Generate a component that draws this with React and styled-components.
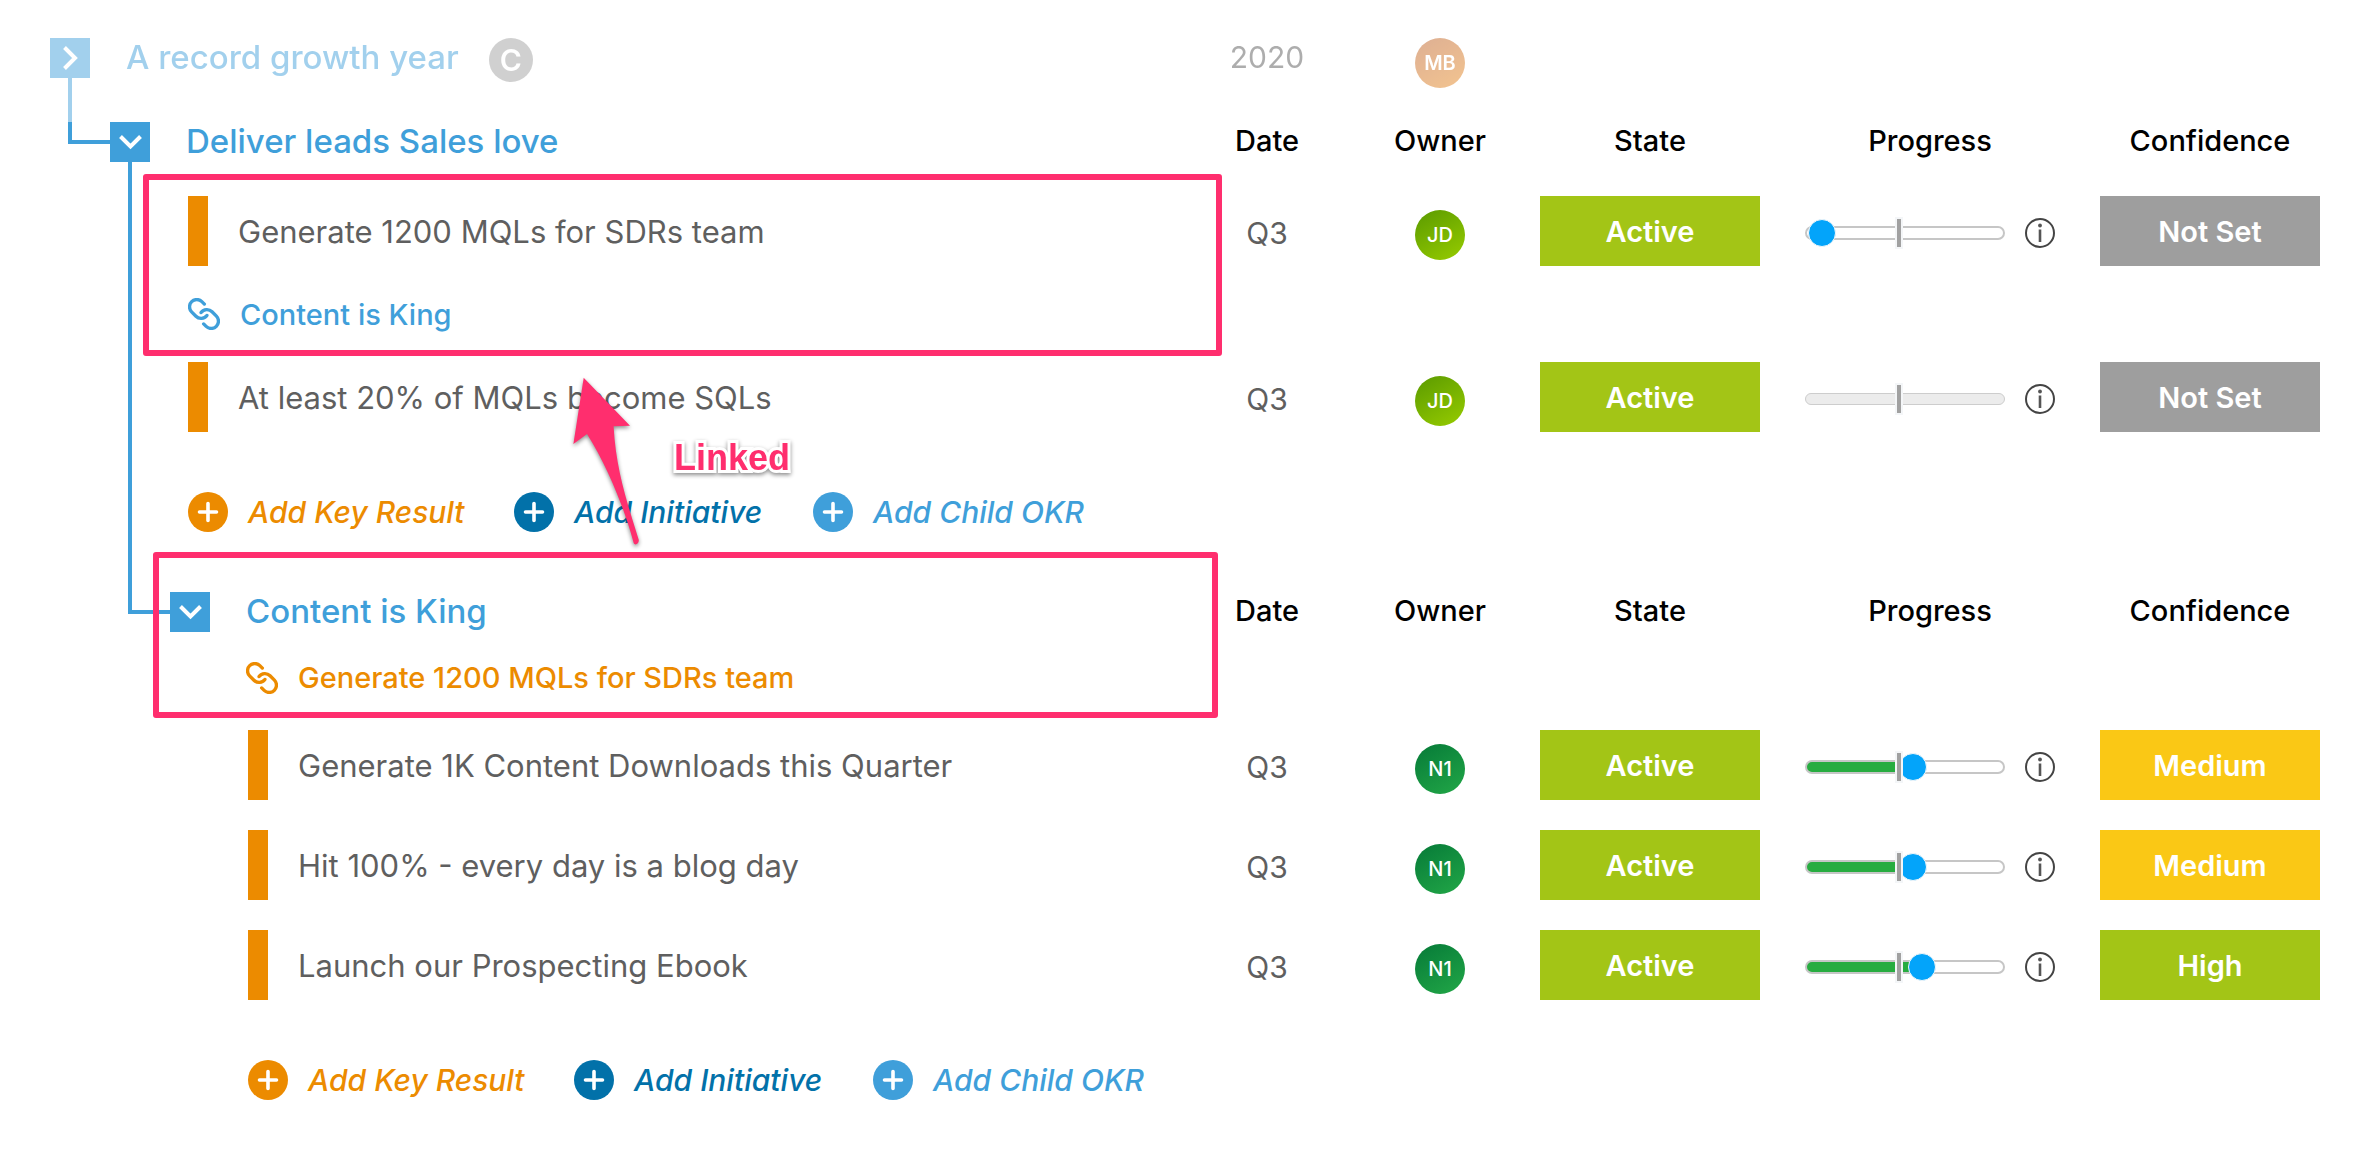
import React from 'react'
import styled, { createGlobalStyle } from 'styled-components'

const GlobalStyle = createGlobalStyle`
  * { box-sizing: border-box; }
  body {
    margin: 0;
    background: #fff;
    font-family: Inter, 'Open Sans', sans-serif;
  }
`

const blue = '#3f9fda'
const orange = '#ec8b00'
const darkBlue = '#0271a9'
const green = '#a3c516'
const pink = '#ff2e6e'
const grey = '#9e9e9e'
const yellow = '#fac815'

const avatarColors = {
  MB: ['#ba5a20', '#e68418'],
  JD: ['#5a9a00', '#97cc00'],
  N1: ['#067a38', '#22a747'],
}

const objectives = [
  {
    title: 'Deliver leads Sales love',
    keys: [
      { name: 'Generate 1200 MQLs for SDRs team', owner: 'JD', value: 0, confidence: 'Not Set', color: grey, link: 'Content is King' },
      { name: 'At least 20% of MQLs become SQLs', owner: 'JD', value: 0, locked: true, confidence: 'Not Set', color: grey },
    ],
  },
  {
    title: 'Content is King',
    link: 'Generate 1200 MQLs for SDRs team',
    keys: [
      { name: 'Generate 1K Content Downloads this Quarter', owner: 'N1', value: 55, confidence: 'Medium', color: yellow },
      { name: 'Hit 100% - every day is a blog day', owner: 'N1', value: 55, confidence: 'Medium', color: yellow },
      { name: 'Launch our Prospecting Ebook', owner: 'N1', value: 60, confidence: 'High', color: green },
    ],
  },
]

function LinkIcon() {
  return (
    <svg width="32" height="32" viewBox="1 1 22 22" fill="none" stroke="currentColor" strokeWidth="2.3" strokeLinecap="round" strokeLinejoin="round" aria-hidden="true">
      <g transform="matrix(-1 0 0 1 24 0)">
        <path d="M10 13a5 5 0 0 0 7.540.540l3-3a5 5 0 0 0-7.070-7.070l-1.720 1.710" />
        <path d="M14 11a5 5 0 0 0-7.540-.540l-3 3a5 5 0 0 0 7.070 7.070l1.710-1.710" />
      </g>
    </svg>
  )
}

function Chevron({ open }) {
  return (
    <svg width="40" height="40" viewBox="0 0 40 40" fill="none" stroke="#fff" strokeWidth="4" aria-hidden="true">
      <path d={open ? 'M10.500 14.500L20.500 24.500L30.500 14.500' : 'M14.500 9.500L25 20L14.500 30.500'} />
    </svg>
  )
}

function InfoIcon() {
  return (
    <svg width="30" height="30" viewBox="0 0 30 30" fill="none" aria-hidden="true">
      <circle cx="15" cy="15" r="14" stroke="#444" strokeWidth="2" />
      <circle cx="15" cy="7.500" r="1.900" fill="#555" />
      <path d="M15 11.500v12.500" stroke="#555" strokeWidth="2.600" />
    </svg>
  )
}

function PlusIcon({ color }) {
  return (
    <svg width="40" height="40" viewBox="0 0 40 40" aria-hidden="true">
      <circle cx="20" cy="20" r="20" fill={color} />
      <path d="M20 11.500v17M11.500 20h17" stroke="#fff" strokeWidth="3.600" strokeLinecap="round" />
    </svg>
  )
}

function AddActions() {
  return (
    <Actions>
      <AddButton $color={orange} $width={276}><PlusIcon color={orange} />Add Key Result</AddButton>
      <AddButton $color={darkBlue} $width={249}><PlusIcon color={darkBlue} />Add Initiative</AddButton>
      <AddButton $color={blue} $width={272}><PlusIcon color={blue} />Add Child OKR</AddButton>
    </Actions>
  )
}

function Progress({ item }) {
  const [value, setValue] = React.useState(item.value)

  return (
    <ProgressBox>
      <SliderWrap>
        <Slider
          type="range"
          min="0"
          max="100"
          value={value}
          disabled={item.locked}
          $value={value}
          aria-label={'Progress of ' + item.name}
          onChange={(e) => setValue(Number(e.target.value))}
        />
        <Marker />
      </SliderWrap>
      <InfoButton aria-label="Progress details"><InfoIcon /></InfoButton>
    </ProgressBox>
  )
}

function KeyResult({ item }) {
  return (
    <Row>
      <NameCell>
        <KeyName>
          <Bar />
          {item.name}
        </KeyName>
        {item.link && (
          <LinkLine href="#" $color={blue} $indent={38}><LinkIcon />{item.link}</LinkLine>
        )}
        {item.link && <Highlight $box="-22px -73px -24px -7px" />}
      </NameCell>
      <Cell $drop={4}>Q3</Cell>
      <Cell $drop={8}><Avatar $colors={avatarColors[item.owner]}>{item.owner}</Avatar></Cell>
      <Cell><Status $color={green}>Active</Status></Cell>
      <Cell $drop={4}><Progress item={item} /></Cell>
      <Cell><Status $color={item.color}>{item.confidence}</Status></Cell>
    </Row>
  )
}

function Objective({ item, depth, last }) {
  const [open, setOpen] = React.useState(true)

  return (
    <Section $depth={depth}>
      <Elbow />
      <Rail>
        <Toggle aria-label={'Toggle ' + item.title} aria-expanded={open} onClick={() => setOpen(!open)}>
          <Chevron open={open} />
        </Toggle>
        {!last && <Stem />}
      </Rail>
      <Body>
        <Table>
          <thead>
            <HeadRow>
              <TitleCell>
                {item.title}
                {item.link && (
                  <LinkLine href="#" $color={orange} $indent={0}><LinkIcon />{item.link}</LinkLine>
                )}
                {item.link && <Highlight $box="-40px -69px -22px -57px" />}
              </TitleCell>
              <HeadCell>Date</HeadCell>
              <HeadCell>Owner</HeadCell>
              <HeadCell>State</HeadCell>
              <HeadCell>Progress</HeadCell>
              <HeadCell>Confidence</HeadCell>
            </HeadRow>
          </thead>
          {open && (
            <Rows>
              {item.keys.map((key) => <KeyResult key={key.name} item={key} />)}
            </Rows>
          )}
        </Table>
        <AddActions />
      </Body>
    </Section>
  )
}

export default function App() {
  return (
    <Page>
      <GlobalStyle />
      <ParentSection>
        <Rail>
          <Toggle aria-label="Toggle A record growth year" aria-expanded={false}>
            <Chevron />
          </Toggle>
          <Stem />
        </Rail>
        <ParentRow>
          <ParentTitle>
            A record growth year
            <Scope>C</Scope>
          </ParentTitle>
          <Year>2020</Year>
          <Avatar $colors={avatarColors.MB} $bold>MB</Avatar>
        </ParentRow>
      </ParentSection>
      <Objective item={objectives[0]} depth={1} />
      <Objective item={objectives[1]} depth={2} last />
      <Arrow width="80" height="180" viewBox="0 0 80 180" aria-hidden="true">
        <path
          d="M18.700 7.700L65 55.700L48.600 56.300C51 100 62 132 73.800 170C74 174 70 176 68.700 173C60 140 42 95 22 64L8.400 74Z"
          fill={pink}
        />
      </Arrow>
      <Note>Linked</Note>
    </Page>
  )
}

const Page = styled.main`
  position: relative;
  padding: 38px 42px 0 0;
  overflow: hidden;
`
const Section = styled.section`
  display: flex;
  padding-left: ${(props) => 8 + props.$depth * 60}px;
`
const ParentSection = styled.section`
  display: flex;
  min-height: 84px;
  padding-left: 50px;
  opacity: 0.48;
`
const Elbow = styled.div`
  flex: none;
  width: 42px;
  height: 22px;
  border-left: 4px solid ${blue};
  border-bottom: 4px solid ${blue};
`
const Rail = styled.div`
  flex: none;
  display: flex;
  flex-direction: column;
  align-items: center;
  width: 40px;
`
const Toggle = styled.button`
  display: flex;
  flex: none;
  width: 40px;
  height: 40px;
  padding: 0;
  border: 0;
  background: ${blue};
  cursor: pointer;
`
const Stem = styled.div`
  flex: 1;
  width: 4px;
  background: ${blue};
`
const Body = styled.div`
  flex: 1;
  min-width: 0;
`
const Table = styled.table`
  display: block;
  thead {
    display: block;
  }
`
const Rows = styled.tbody`
  display: flex;
  flex-direction: column;
  gap: 30px;
`
const Row = styled.tr`
  display: grid;
  grid-template-columns: minmax(0, 1fr) 146px 110px 220px 250px 220px;
  column-gap: 45px;
  align-items: start;
`
const HeadRow = styled(Row)`
  min-height: 40px;
  margin-bottom: 34px;
`
const ParentRow = styled(Row).attrs({ as: 'div' })`
  flex: 1;
  justify-items: center;
`
const TitleCell = styled.th`
  position: relative;
  padding: 0 0 0 36px;
  text-align: left;
  font-size: 33px;
  line-height: 38px;
  font-weight: 500;
  color: ${blue};
`
const ParentTitle = styled.div`
  display: flex;
  align-items: flex-start;
  justify-self: start;
  gap: 30px;
  padding-left: 36px;
  font-size: 33px;
  line-height: 38px;
  font-weight: 500;
  color: ${blue};
`
const Scope = styled.span`
  width: 44px;
  height: 44px;
  border-radius: 50%;
  background: ${grey};
  color: #fff;
  font-size: 30px;
  line-height: 44px;
  font-weight: 600;
  text-align: center;
`
const Year = styled.span`
  font-size: 30px;
  line-height: 38px;
  color: #555;
`
const HeadCell = styled.th`
  padding: 0;
  font-size: 29px;
  line-height: 38px;
  font-weight: 500;
  color: #000;
`
const NameCell = styled.td`
  position: relative;
  padding: 0;
`
const KeyName = styled.div`
  display: flex;
  align-items: center;
  gap: 30px;
  height: 70px;
  padding-left: 38px;
  font-size: 31px;
  color: #5f5f5f;
  white-space: nowrap;
`
const Bar = styled.span`
  width: 20px;
  height: 70px;
  background: ${orange};
`
const LinkLine = styled.a`
  display: flex;
  align-items: center;
  gap: 20px;
  height: 36px;
  margin-top: 30px;
  padding-left: ${(props) => props.$indent}px;
  font-size: 29px;
  font-weight: 500;
  color: ${(props) => props.$color};
  text-decoration: none;
`
const Cell = styled.td`
  display: flex;
  align-items: center;
  justify-content: center;
  height: 70px;
  padding: ${(props) => props.$drop || 0}px 0 0;
  font-size: 30px;
  color: #5f5f5f;
`
const Avatar = styled.span`
  width: 50px;
  height: 50px;
  border-radius: 50%;
  background: linear-gradient(150deg, ${(props) => props.$colors[0]}, ${(props) => props.$colors[1]});
  color: #fff;
  font-size: 20px;
  line-height: 50px;
  font-weight: ${(props) => (props.$bold ? 600 : 500)};
  text-align: center;
`
const Status = styled.button`
  width: 100%;
  height: 70px;
  padding: 0;
  border: 0;
  background: ${(props) => props.$color};
  color: #fff;
  font-family: inherit;
  font-size: 29px;
  font-weight: 600;
  cursor: pointer;
`
const ProgressBox = styled.div`
  display: flex;
  flex: 1;
  align-items: center;
  gap: 20px;
`
const SliderWrap = styled.div`
  position: relative;
  display: flex;
  align-items: center;
  width: 200px;
  height: 32px;
`
const Slider = styled.input`
  appearance: none;
  width: 100%;
  height: 14px;
  margin: 0;
  padding: 0 1px;
  border: 2px solid #c6c6c6;
  border-radius: 7px;
  background: linear-gradient(#27ac40, #27ac40) no-repeat 0 0 / ${(props) => props.$value}% 100%;

  &::-webkit-slider-thumb {
    appearance: none;
    width: 28px;
    height: 28px;
    border: 1px solid #f2f6f9;
    border-radius: 50%;
    background: #03a4fa;
  }
  &:disabled {
    height: 12px;
    border: 1px solid #cdcdcd;
    background: #ececec;
  }
  &:disabled::-webkit-slider-thumb {
    visibility: hidden;
  }
`
// expected progress for today, drawn over the track
const Marker = styled.span`
  position: absolute;
  left: 90px;
  top: 0;
  width: 8px;
  height: 32px;
  border: 2px solid #f4f6f8;
  background: #a1a1a1;
  pointer-events: none;
`
const InfoButton = styled.button`
  display: flex;
  padding: 0;
  border: 0;
  background: none;
  cursor: pointer;
`
const Actions = styled.div`
  display: flex;
  gap: 50px;
  margin-top: 60px;
  padding: 0 0 60px 38px;
`
const AddButton = styled.button`
  display: flex;
  align-items: center;
  gap: 20px;
  width: ${(props) => props.$width}px;
  height: 40px;
  padding: 0;
  border: 0;
  background: none;
  color: ${(props) => props.$color};
  font-family: inherit;
  font-size: 30px;
  font-style: italic;
  font-weight: 500;
  white-space: nowrap;
  cursor: pointer;
  svg {
    flex: none;
  }
`
const Highlight = styled.span`
  position: absolute;
  inset: ${(props) => props.$box};
  border: 6px solid ${pink};
  border-radius: 3px;
  pointer-events: none;
`
const Arrow = styled.svg`
  position: absolute;
  left: 565px;
  top: 370px;
  filter: drop-shadow(0 2px 2px rgba(0, 0, 0, 0.45));
  pointer-events: none;
`
const Note = styled.strong`
  position: absolute;
  left: 674px;
  top: 437px;
  font-family: 'Liberation Sans', sans-serif;
  font-size: 36px;
  line-height: 42px;
  color: ${pink};
  -webkit-text-stroke: 6px #fff;
  paint-order: stroke fill;
  filter: drop-shadow(0 2px 2px rgba(0, 0, 0, 0.45));
`
